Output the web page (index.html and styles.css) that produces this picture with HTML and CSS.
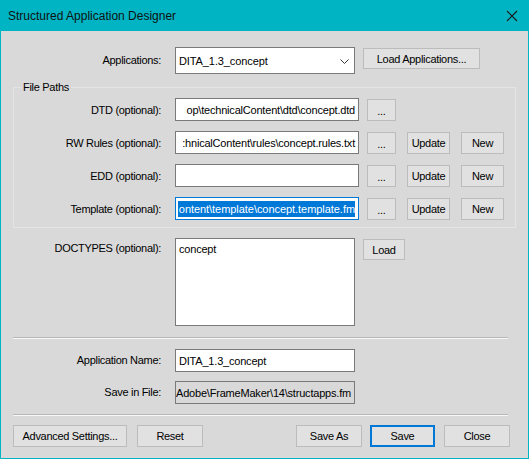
FILE: index.html
```html
<!DOCTYPE html>
<html>
<head>
<meta charset="utf-8">
<link rel="stylesheet" href="styles.css">
</head>
<body>
<div class="window">
  <div class="titlebar">
    <span class="title">Structured Application Designer</span>
    <svg class="close" width="12" height="12" viewBox="0 0 12 12"><path d="M1 1 L11 11 M11 1 L1 11" stroke="#1a1a1a" stroke-width="1.1" fill="none"/></svg>
  </div>
  <div class="body">
    <div class="row apps">
      <div class="label">Applications:</div>
      <div class="combo">
        <span>DITA_1.3_concept</span>
        <svg class="chev" width="9" height="5" viewBox="0 0 9 5"><path d="M0.5 0.5 L4.5 4.5 L8.5 0.5" stroke="#333" stroke-width="1" fill="none"/></svg>
      </div>
      <div class="btn btn-load-apps">Load Applications...</div>
    </div>

    <div class="group">
      <span class="legend">File Paths</span>
      <div class="grow">
        <div class="label glabel">DTD (optional):</div>
        <div class="field path"><span>op\technicalContent\dtd\concept.dtd</span></div>
        <div class="btn btn-dots">...</div>
      </div>
      <div class="grow">
        <div class="label glabel">RW Rules (optional):</div>
        <div class="field path"><span>:hnicalContent\rules\concept.rules.txt</span></div>
        <div class="btn btn-dots">...</div>
        <div class="btn btn-small">Update</div>
        <div class="btn btn-small">New</div>
      </div>
      <div class="grow">
        <div class="label glabel">EDD (optional):</div>
        <div class="field path"></div>
        <div class="btn btn-dots">...</div>
        <div class="btn btn-small">Update</div>
        <div class="btn btn-small">New</div>
      </div>
      <div class="grow">
        <div class="label glabel">Template (optional):</div>
        <div class="field path focused"><span class="sel">ontent\template\concept.template.fm</span></div>
        <div class="btn btn-dots">...</div>
        <div class="btn btn-small">Update</div>
        <div class="btn btn-small">New</div>
      </div>
    </div>

    <div class="row doctypes">
      <div class="label toplabel">DOCTYPES (optional):</div>
      <div class="listbox">concept</div>
      <div class="btn btn-load">Load</div>
    </div>

    <div class="sep"></div>

    <div class="row appname">
      <div class="label">Application Name:</div>
      <div class="field name"><span>DITA_1.3_concept</span></div>
    </div>
    <div class="row savefile">
      <div class="label">Save in File:</div>
      <div class="field name readonly path"><span>Adobe\FrameMaker\14\structapps.fm</span></div>
    </div>

    <div class="sep sep2"></div>

    <div class="actions">
      <div class="btn btn-adv">Advanced Settings...</div>
      <div class="btn btn-reset">Reset</div>
      <div class="spacer"></div>
      <div class="btn btn-saveas">Save As</div>
      <div class="btn btn-save">Save</div>
      <div class="btn btn-close">Close</div>
    </div>
  </div>
</div>
</body>
</html>
```

FILE: styles.css
```css
html, body {
  margin: 0;
  padding: 0;
  background: #d9d9d9;
}
.window {
  width: 529px;
  height: 459px;
  box-sizing: border-box;
  border: 1px solid #00b4c4;
  border-top: none;
  display: flex;
  flex-direction: column;
  font-family: "Liberation Sans", Arial, sans-serif;
  font-size: 11px;
  letter-spacing: -0.3px;
  color: #000;
}
.titlebar {
  height: 31px;
  background: #00b4c4;
  display: flex;
  align-items: center;
  justify-content: space-between;
  padding: 0 11px 0 8px;
  box-sizing: border-box;
  margin: 0 -1px;
}
.title {
  font-size: 12px;
  letter-spacing: 0;
  color: #111;
  padding-top: 1px;
}
.close {
  display: block;
}
.body {
  flex: 1;
  background: #d9d9d9;
  padding-top: 16px;
  display: flex;
  flex-direction: column;
}
.row {
  display: flex;
  align-items: flex-start;
}
.label {
  width: 160px;
  flex: none;
  text-align: right;
  margin-right: 14px;
  white-space: nowrap;
}
.apps .label {
  line-height: 27px;
}
.combo {
  width: 180px;
  height: 27px;
  box-sizing: border-box;
  border: 1px solid #7a7a7a;
  background: #fff;
  display: flex;
  align-items: center;
  justify-content: space-between;
  padding: 1px 5px 0 3px;
  font-size: 11px;
  letter-spacing: -0.1px;
}
.chev {
  display: block;
  margin-top: 0;
}
.btn {
  box-sizing: border-box;
  border: 1px solid #bcbcbc;
  background: #e1e1e1;
  display: flex;
  align-items: center;
  justify-content: center;
  white-space: nowrap;
  flex: none;
}
.btn-load-apps {
  width: 117px;
  height: 21px;
  margin-left: 8px;
  margin-top: 1px;
}
.group {
  position: relative;
  margin: 13px 0 0 12px;
  width: 503px;
  box-sizing: border-box;
  border: 1px solid #e4e4e4;
  padding: 10px 0 7px 0;
  display: flex;
  flex-direction: column;
  gap: 10px;
}
.legend {
  position: absolute;
  top: -8px;
  left: 7px;
  background: #d9d9d9;
  padding: 0 2px;
  line-height: 14px;
}
.grow {
  display: flex;
  align-items: center;
  height: 23px;
}
.glabel {
  width: 147px;
}
.field {
  height: 23px;
  box-sizing: border-box;
  border: 1px solid #7a7a7a;
  background: #fff;
  display: flex;
  align-items: center;
  overflow: hidden;
  white-space: nowrap;
  font-size: 11px;
  letter-spacing: -0.2px;
  flex: none;
}
.path {
  width: 184px;
  justify-content: flex-end;
  padding: 0 3px 0 2px;
}
.path span {
  flex: none;
}
.focused {
  border-color: #0078d7;
}
.sel {
  background: #0078d7;
  color: #fff;
  line-height: 16px;
  letter-spacing: -0.05px;
  padding-left: 1px;
}
.btn-dots {
  width: 29px;
  height: 22px;
  margin-left: 8px;
  padding-top: 3px;
}
.btn-small {
  width: 43px;
  height: 22px;
  margin-left: 11px;
}
.doctypes {
  margin-top: 10px;
}
.toplabel {
  padding-top: 3px;
  line-height: 14px;
}
.listbox {
  width: 180px;
  height: 88px;
  box-sizing: border-box;
  border: 1px solid #7a7a7a;
  background: #fff;
  padding: 3px 3px;
  font-size: 11px;
  letter-spacing: -0.2px;
  line-height: 14px;
}
.btn-load {
  width: 42px;
  height: 21px;
  margin-left: 8px;
  margin-top: 1px;
}
.sep {
  margin: 11px 0 0 12px;
  width: 495px;
  height: 0;
  border-top: 1px solid #b8b8b8;
  border-bottom: 1px solid #f7f7f7;
}
.appname {
  margin-top: 10px;
}
.appname .label, .savefile .label {
  line-height: 23px;
}
.savefile {
  margin-top: 9px;
}
.name {
  width: 180px;
  padding: 0 3px;
}
.readonly {
  background: #d9d9d9;
}
.sep2 {
  margin-top: 10px;
}
.actions {
  display: flex;
  margin-top: 9px;
  padding-left: 12px;
}
.actions .btn {
  height: 22px;
}
.spacer {
  flex: 1;
}
.btn-adv {
  width: 114px;
}
.btn-reset {
  width: 66px;
  margin-left: 10px;
}
.btn-saveas {
  width: 66px;
}
.btn-save {
  width: 65px;
  margin-left: 8px;
  border: 2px solid #0078d7;
}
.btn-close {
  width: 66px;
  margin-left: 9px;
  margin-right: 18px;
}
```
